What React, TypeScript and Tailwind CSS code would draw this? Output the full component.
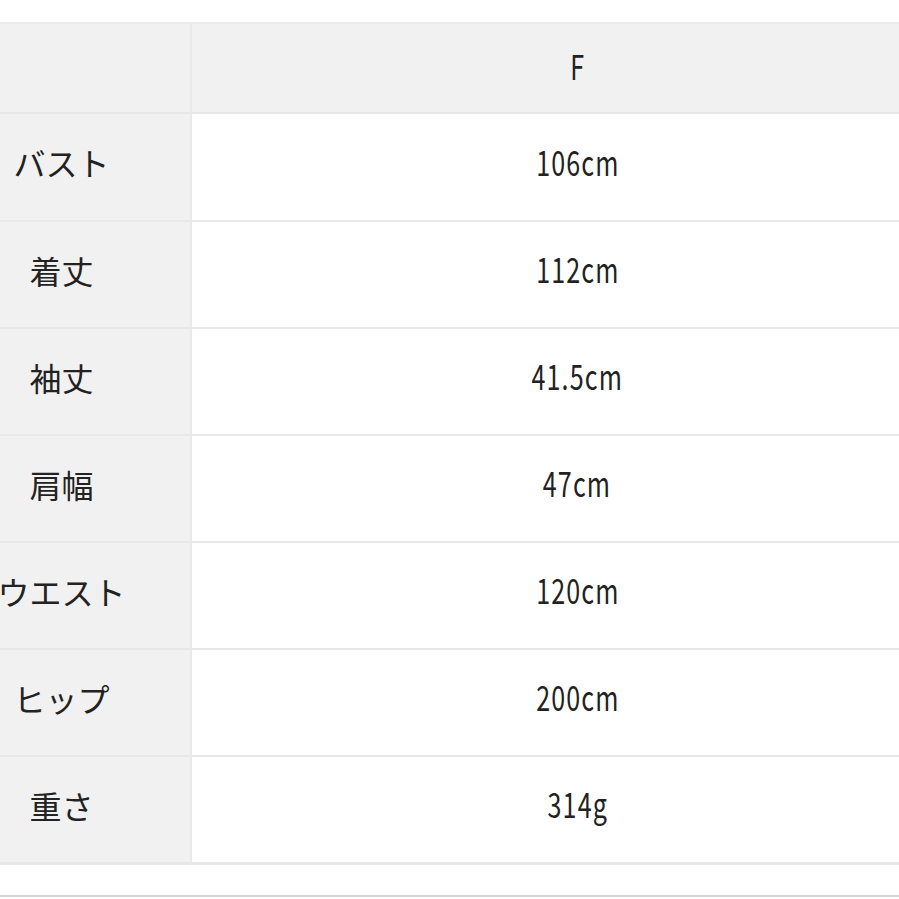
const rows: [string, string][] = [
  ["バスト", "106cm"],
  ["着丈", "112cm"],
  ["袖丈", "41.5cm"],
  ["肩幅", "47cm"],
  ["ウエスト", "120cm"],
  ["ヒップ", "200cm"],
  ["重さ", "314g"],
];

function Value({ text }: { text: string }) {
  return (
    <span className="inline-block scale-x-[0.76] scale-y-[1.05] text-[33px] leading-none tracking-[1.5px] text-[#222]">
      {text}
    </span>
  );
}

export default function App() {
  return (
    <div className="w-[899px] h-[899px] overflow-hidden bg-white font-['Noto_Sans_CJK_JP','Noto_Sans',sans-serif]">
      <div className="h-[22px]" />
      <div className="ml-[-67px] w-[1030px] border-t-2 border-[#ebebeb]">
        <div className="flex h-[88px]">
          <div className="w-[259px] bg-[#f1f1f1] border-r-2 border-[#e9e9e9]" />
          <div className="flex-1 bg-[#f1f1f1] flex items-center justify-center pb-[6px]">
            <Value text="F" />
          </div>
        </div>
        {rows.map(([label, value], i) => (
          <div key={label} className={`flex border-t-2 border-[#e8e8e8] ${i === 0 ? "h-[108px]" : "h-[107px]"}`}>
            <div className="w-[259px] bg-[#f1f1f1] border-r-2 border-[#e9e9e9] flex items-center justify-center pb-[10px] text-[32px] text-[#222] whitespace-nowrap">
              {label}
            </div>
            <div className="flex-1 bg-white flex items-center justify-center pb-[12px]">
              <Value text={value} />
            </div>
          </div>
        ))}
        <div className="border-t-[3px] border-[#e8e8e8] h-[33px]" />
        <div className="border-t-2 border-[#d6d6d6]" />
      </div>
    </div>
  );
}
